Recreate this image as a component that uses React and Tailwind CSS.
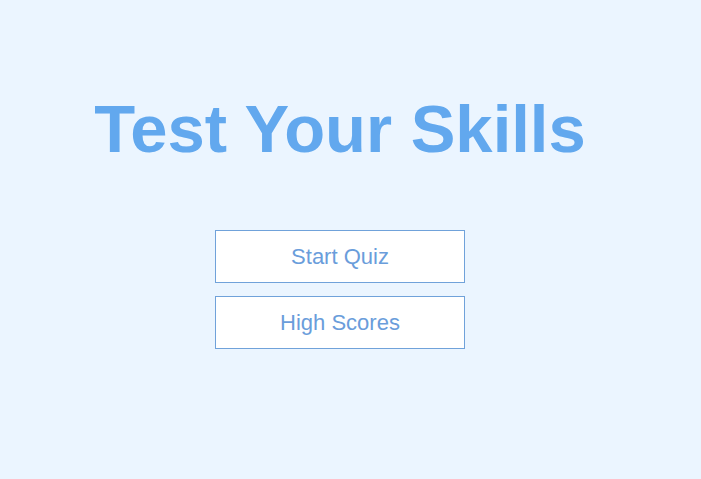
export default function App() {
  return (
    <div className="min-h-[479px] w-full bg-[#ebf5ff]" style={{ fontFamily: '"Liberation Sans", Arial, sans-serif' }}>
      <div className="flex w-[680px] flex-col items-center pt-[95px]">
        <h1 className="text-[67px] font-bold leading-none text-[#62a8ee]">Test Your Skills</h1>
        <div className="mt-[68px] flex flex-col gap-[13px]">
          <button className="flex h-[53px] w-[250px] items-center justify-center border border-[#70a2da] bg-white text-[22px] text-[#6a9ddb]">
            Start Quiz
          </button>
          <button className="flex h-[53px] w-[250px] items-center justify-center border border-[#70a2da] bg-white text-[22px] text-[#6a9ddb]">
            High Scores
          </button>
        </div>
      </div>
    </div>
  );
}
